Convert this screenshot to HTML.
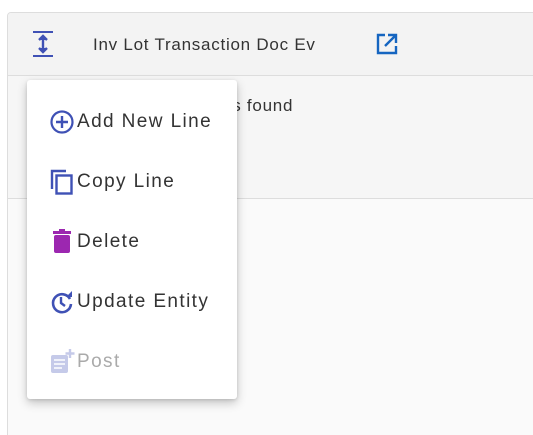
<!DOCTYPE html>
<html><head><style>
html,body{margin:0;width:533px;height:435px;overflow:hidden}
body{background:#fff;font-family:"Liberation Sans",sans-serif;position:relative}
.card{position:absolute;left:7px;top:12px;width:540px;height:440px;border:1px solid #ddd;border-radius:4px;background:#fafafa;overflow:hidden}
.hdr{position:absolute;left:0;top:0;right:0;height:62px;background:#f3f3f3;border-bottom:1px solid #ddd}
.mid{position:absolute;left:0;top:63px;right:0;height:122px;background:#f6f6f6;border-bottom:1px solid #ddd}
.t{position:absolute;color:#333;white-space:nowrap}
.menu{position:absolute;left:27px;top:80px;width:210px;height:319px;background:#fff;border-radius:3px;box-shadow:0 4px 10px rgba(0,0,0,.22),0 1px 3px rgba(0,0,0,.12)}
.it{position:absolute;left:22px;height:30px;display:flex;align-items:center;font-size:19px;color:#333;letter-spacing:1.4px;white-space:nowrap}
.it svg{margin-right:2px}
</style></head><body>
<div class="card">
 <div class="hdr">
  <svg style="position:absolute;left:24px;top:17px" width="22" height="28" viewBox="0 0 22 28"><rect x="1" y="1" width="20" height="2" fill="#3f51b5"/><rect x="1" y="25" width="20" height="2" fill="#3f51b5"/><path d="M11 6v16M7 10l4-4 4 4M7 18l4 4 4-4" stroke="#3f51b5" stroke-width="2.4" fill="#3f51b5"/></svg>
  <div class="t" style="left:85px;top:22px;font-size:17px;letter-spacing:0.75px">Inv Lot Transaction Doc Ev</div>
  <svg style="position:absolute;left:368px;top:20px" width="22" height="22" viewBox="0 0 22 22"><path d="M9 2H2v18h18v-7" stroke="#1565c0" stroke-width="2.4" fill="none"/><path d="M12 2h8v8M20 2L9 13" stroke="#1565c0" stroke-width="2.4" fill="none"/></svg>
 </div>
 <div class="mid"><div class="t" style="left:214px;top:20px;font-size:17px;letter-spacing:0.75px">ds found</div></div>
</div>
<div class="menu">
 <div class="it" style="top:27px"><svg width="26" height="26" viewBox="0 0 26 26"><circle cx="13" cy="13" r="10.5" stroke="#3f51b5" stroke-width="2.2" fill="none"/><path d="M13 7v12M7 13h12" stroke="#3f51b5" stroke-width="2.4"/></svg>Add New Line</div>
 <div class="it" style="top:87px"><svg width="26" height="28" viewBox="0 0 26 28"><path d="M3 21V3h14" stroke="#3f51b5" stroke-width="2.4" fill="none"/><rect x="7.5" y="7.5" width="15" height="18" stroke="#3f51b5" stroke-width="2.4" fill="none"/></svg>Copy Line</div>
 <div class="it" style="top:147px"><svg width="26" height="26" viewBox="0 0 26 26"><rect x="4" y="2" width="18" height="3" fill="#9c27b0"/><rect x="10" y="0" width="6" height="3" fill="#9c27b0"/><rect x="5" y="6" width="16" height="18" rx="2" fill="#9c27b0"/></svg>Delete</div>
 <div class="it" style="top:207px"><svg width="26" height="26" viewBox="0 0 26 26"><path d="M21 10A9 9 0 1 0 22 15" stroke="#3f51b5" stroke-width="2.6" fill="none"/><path d="M17 8h6V2z" fill="#3f51b5"/><path d="M12 8v6l4 3" stroke="#3f51b5" stroke-width="2.4" fill="none"/></svg>Update Entity</div>
 <div class="it" style="top:267px;color:#aaa"><svg width="26" height="26" viewBox="0 0 26 26"><rect x="2" y="6" width="17" height="18" rx="2" fill="#c5cae9"/><path d="M5 11h11M5 15h11M5 19h8" stroke="#fff" stroke-width="1.6"/><path d="M21 0v9M16.5 4.5h9" stroke="#c5cae9" stroke-width="2.4"/></svg>Post</div>
</div>
</body></html>
